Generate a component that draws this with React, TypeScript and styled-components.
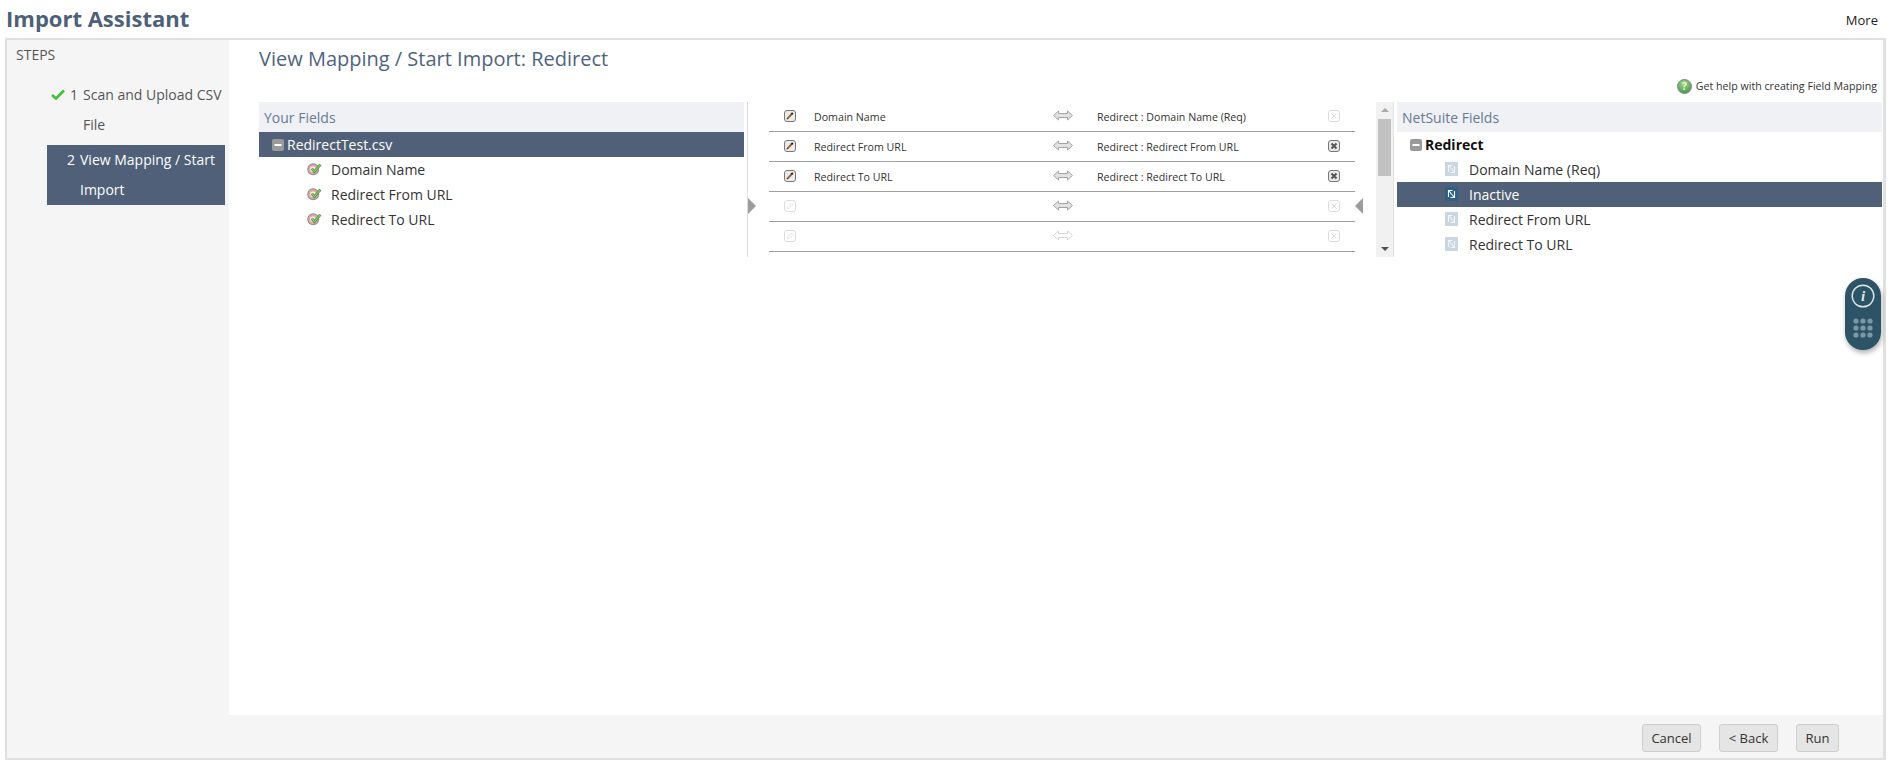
import React from "react";
import styled, { createGlobalStyle } from "styled-components";

const Global = createGlobalStyle`
  html, body { margin: 0; padding: 0; background: #fff; }
  body { font-family: "Open Sans", "Liberation Sans", sans-serif; overflow: hidden; }
  * { box-sizing: border-box; }
`;

const Page = styled.div`
  width: 1892px;
  height: 766px;
  padding: 0 6px 6px 5px;
  display: flex;
  flex-direction: column;
  overflow: hidden;
`;
const TopBar = styled.header`
  height: 38px;
  flex: none;
  display: flex;
  justify-content: space-between;
  align-items: flex-start;
`;
const Title = styled.h1`
  margin: 3px 0 0 1px;
  font-size: 22px;
  line-height: 30px;
  font-weight: 700;
  color: #4d5f79;
`;
const MoreLink = styled.span`
  margin: 11px 8px 0 0;
  font-size: 13px;
  line-height: 18px;
  font-weight: 500;
  color: #222;
`;
const Frame = styled.div`
  flex: 1;
  position: relative;
  display: flex;
  border: 2px solid #e0e0e0;
  border-right-width: 3px;
`;
const Sidebar = styled.aside`
  width: 222px;
  flex: none;
  background: #f5f5f5;
  padding: 6px 4px 0 9px;
`;
const SideTitle = styled.div`
  font-size: 14px;
  line-height: 18px;
  color: #555;
  margin-bottom: 16px;
`;
const StepBox = styled.div<{ $active?: boolean }>`
  display: flex;
  margin-left: 31px;
  margin-bottom: 5px;
  width: 178px;
  font-size: 14px;
  line-height: 30px;
  color: ${(p) => (p.$active ? "#fff" : "#555")};
  background: ${(p) => (p.$active ? "#4f6078" : "transparent")};
`;
const StepMark = styled.span`
  width: 36px;
  flex: none;
  display: flex;
  justify-content: flex-end;
  padding-right: 5px;
  white-space: nowrap;
  gap: 5px;
  align-items: flex-start;
`;
const StepMarkActive = styled(StepMark)`
  width: 33px;
  padding-right: 5px;
`;
const CheckSvg = styled.svg`
  margin-top: 9px;
  flex: none;
`;
const StepText = styled.span`
  display: block;
  white-space: pre-line;
`;
const Column = styled.div`
  flex: 1;
  min-width: 0;
  display: flex;
  flex-direction: column;
`;
const Main = styled.main`
  flex: 1;
  background: #fff;
  padding: 5px 1px 0 30px;
`;
const Heading = styled.h2`
  margin: 0;
  font-size: 20px;
  line-height: 28px;
  font-weight: 400;
  color: #4f6480;
`;
const HelpRow = styled.div`
  height: 29px;
  padding: 0 5px 3px 0;
  display: flex;
  align-items: center;
  justify-content: flex-end;
  gap: 4px;
  font-size: 10.65px;
  line-height: 16px;
  color: #333;
`;
const Mapper = styled.div`
  display: flex;
  align-items: flex-start;
  height: 155px;
`;
const FieldPanel = styled.section`
  width: 485px;
  flex: none;
`;
const PanelHead = styled.div`
  height: 30px;
  padding-left: 5px;
  background: #eff1f5;
  font-size: 14px;
  line-height: 32px;
  color: #6a7a92;
`;
const RootRow = styled.div<{ $dark?: boolean }>`
  height: 25px;
  display: flex;
  align-items: center;
  gap: 3px;
  padding-left: 13px;
  font-size: 14px;
  font-weight: ${(p) => (p.$dark ? 400 : 700)};
  color: ${(p) => (p.$dark ? "#fff" : "#111")};
  background: ${(p) => (p.$dark ? "#4f6078" : "transparent")};
`;
const LeafRow = styled.div<{ $active?: boolean }>`
  height: 25px;
  display: flex;
  align-items: center;
  padding-left: 48px;
  font-size: 14px;
  color: ${(p) => (p.$active ? "#fff" : "#333")};
  background: ${(p) => (p.$active ? "#4f6078" : "transparent")};
`;
const LeafIconSlot = styled.span`
  width: 24px;
  flex: none;
  display: flex;
  align-items: center;
  margin-top: -2px;
`;
const Middle = styled.div`
  flex: none;
  width: 653px;
  height: 155px;
  display: flex;
  align-items: flex-start;
  position: relative;
`;
const Rule = styled.div`
  flex: none;
  width: 1px;
  height: 155px;
  margin-left: 3px;
  background: #dedede;
`;
const TriangleSlot = styled.div`
  width: 21px;
  flex: none;
  padding-top: 96px;
`;
const Triangle = styled.div<{ $left?: boolean }>`
  width: 0;
  height: 0;
  border-top: 8px solid transparent;
  border-bottom: 8px solid transparent;
  ${(p) => (p.$left ? "border-right: 8px solid #9c9c9c;" : "border-left: 8px solid #9c9c9c;")}
`;
const MapTable = styled.div`
  width: 586px;
  flex: none;
`;
const MapRow = styled.div`
  height: 30px;
  display: grid;
  grid-template-columns: 45px 239px 44px 231px 1fr;
  align-items: center;
  border-bottom: 1px solid #a0a0a0;
  font-size: 10.65px;
  color: #333;
`;
const Cell = styled.span`
  display: flex;
  align-items: center;
  white-space: nowrap;
`;
const IconCell = styled.span<{ $inset?: boolean }>`
  display: flex;
  align-items: center;
  margin-top: -2px;
  padding-left: ${(p) => (p.$inset ? 15 : 0)}px;
`;
const Scroller = styled.div`
  flex: none;
  width: 18px;
  height: 155px;
  background: #f1f1f1;
  border-right: 1px solid #e2e2e2;
  display: flex;
  flex-direction: column;
  align-items: center;
  justify-content: space-between;
  position: relative;
  padding: 6px 0;
`;
const ScrollThumb = styled.div`
  position: absolute;
  left: 2px;
  top: 17px;
  width: 13px;
  height: 57px;
  background: #c1c1c1;
`;
const ScrollUp = styled.div`
  width: 0;
  height: 0;
  border-left: 4px solid transparent;
  border-right: 4px solid transparent;
  border-bottom: 4px solid #a8a8a8;
`;
const ScrollDown = styled.div`
  width: 0;
  height: 0;
  border-left: 4px solid transparent;
  border-right: 4px solid transparent;
  border-top: 4px solid #505050;
`;
const Footer = styled.footer`
  height: 43px;
  flex: none;
  background: #f5f5f5;
  display: flex;
  justify-content: flex-end;
  align-items: flex-start;
  gap: 18px;
  padding: 9px 44px 0 0;
`;
const Btn = styled.button<{ $w: number }>`
  width: ${(p) => p.$w}px;
  height: 28px;
  padding: 0;
  background: #e5e5e5;
  border: 1px solid #cfcfcf;
  border-radius: 3px;
  font-family: inherit;
  font-size: 13px;
  color: #333;
`;
const Widget = styled.div`
  position: absolute;
  left: 1838px;
  top: 238px;
  width: 36px;
  height: 72px;
  border-radius: 18px;
  background: #2d5367;
  box-shadow: 1px 3px 5px rgba(0, 0, 0, 0.3);
  display: flex;
  flex-direction: column;
  align-items: center;
  padding-top: 6px;
  gap: 10px;
`;

const Minus = ({ color = "#9a9a9a" }: { color?: string }) => (
  <svg width="12" height="12" viewBox="0 0 12 12">
    <rect width="12" height="12" rx="2" fill={color} />
    <rect x="2.5" y="5" width="7" height="2" fill="#fff" />
  </svg>
);
const Check = () => (
  <CheckSvg width="14" height="11" viewBox="0 0 14 11">
    <path d="M1 6 L5 9.5 L13 1.5" fill="none" stroke="#3fbf3a" strokeWidth="2.6" />
  </CheckSvg>
);
const FieldIcon = () => (
  <svg width="15" height="14" viewBox="0 0 15 14">
    <circle cx="6.2" cy="7.3" r="5.4" fill="#e9a6a6" stroke="#8f8f8f" strokeWidth="1.1" />
    <circle cx="6" cy="7.2" r="2.8" fill="#fbeeee" />
    <path d="M4.8 6.6 L7.4 9.6 L13.4 2.6" fill="none" stroke="#5f9e48" strokeWidth="2.8" />
    <path d="M4.8 6.6 L7.4 9.6 L13.4 2.6" fill="none" stroke="#9ed27e" strokeWidth="1" />
  </svg>
);
const NsIcon = ({ active }: { active?: boolean }) => (
  <svg width="13" height="14" viewBox="0 0 13 14">
    <rect width="13" height="14" fill={active ? "#2f5f85" : "#cad6e1"} />
    <path
      d="M3.5 10 L3.5 3.5 L7.5 3.5 M9.5 4 L9.5 10.5 L5.5 10.5 M4 4 L9 10"
      fill="none"
      stroke={active ? "#ffffff" : "#f1f5f8"}
      strokeWidth="1.1"
    />
  </svg>
);
const EditIcon = ({ off }: { off?: boolean }) => (
  <svg width="12" height="12" viewBox="0 0 12 12">
    <rect x="0.5" y="0.5" width="11" height="11" rx="2.5" fill={off ? "#fff" : "#ececec"} stroke={off ? "#dcdcdc" : "#777"} />
    {off ? (
      <path d="M3.5 8.5 L3.5 7 L7.5 3 L9 4.5 L5 8.5 Z" fill="none" stroke="#dcdcdc" strokeWidth="0.9" />
    ) : (
      <>
        <path d="M3.4 8.6 L7.8 4" stroke="#9a6a30" strokeWidth="2" />
        <path d="M7.4 4.4 L8.8 2.9" stroke="#222" strokeWidth="2" />
        <path d="M2.8 9.2 L3.6 8.4" stroke="#222" strokeWidth="1.2" />
      </>
    )}
  </svg>
);
const RemoveIcon = ({ on }: { on?: boolean }) => (
  <svg width="12" height="12" viewBox="0 0 12 12">
    <rect x="0.5" y="0.5" width="11" height="11" rx="2.5" fill={on ? "#e8e8e8" : "#fff"} stroke={on ? "#777" : "#dcdcdc"} />
    <path d="M3.5 3.5 L8.5 8.5 M8.5 3.5 L3.5 8.5" stroke={on ? "#555" : "#dcdcdc"} strokeWidth={on ? 2 : 1} />
  </svg>
);
const ArrowIcon = ({ faint }: { faint?: boolean }) => (
  <svg width="20" height="11" viewBox="0 0 20 11">
    <path
      d="M0.5 5.5 L5.5 1 L5.5 3.5 L14.5 3.5 L14.5 1 L19.5 5.5 L14.5 10 L14.5 7.5 L5.5 7.5 L5.5 10 Z"
      fill={faint ? "#fff" : "#e2e2e2"}
      stroke={faint ? "#d6d6d6" : "#a4a4a4"}
      strokeWidth="1"
    />
  </svg>
);
const HelpIcon = () => (
  <svg width="15" height="15" viewBox="0 0 15 15">
    <defs>
      <radialGradient id="helpGlow" cx="45%" cy="30%" r="75%">
        <stop offset="0%" stopColor="#a8d58e" />
        <stop offset="100%" stopColor="#3f9350" />
      </radialGradient>
    </defs>
    <circle cx="7.5" cy="7.5" r="7" fill="url(#helpGlow)" stroke="#7c8f7c" />
    <text x="7.5" y="11" textAnchor="middle" fontSize="10" fontWeight="700" fill="#f4f8c8" fontFamily="Open Sans">?</text>
  </svg>
);
const InfoIcon = () => (
  <svg width="24" height="24" viewBox="0 0 24 24">
    <circle cx="12" cy="12" r="10.8" fill="none" stroke="#dfe7ea" strokeWidth="1.4" />
    <text x="12" y="17" textAnchor="middle" fontSize="15" fontStyle="italic" fontWeight="700" fill="#dfe7ea" fontFamily="Liberation Serif">i</text>
  </svg>
);
const DotsIcon = () => (
  <svg width="20" height="20" viewBox="0 0 20 20" fill="#7d98a5">
    {[3, 10, 17].flatMap((y) =>
      [3, 10, 17].map((x) => <circle key={`${x}-${y}`} cx={x} cy={y} r="2.6" />)
    )}
  </svg>
);

const sources = ["Domain Name", "Redirect From URL", "Redirect To URL"];
const rows = [
  { from: "Domain Name", to: "Redirect : Domain Name (Req)", on: false },
  { from: "Redirect From URL", to: "Redirect : Redirect From URL", on: true },
  { from: "Redirect To URL", to: "Redirect : Redirect To URL", on: true },
  { from: "", to: "", on: false },
  { from: "", to: "", on: false },
];
const targets = ["Domain Name (Req)", "Inactive", "Redirect From URL", "Redirect To URL"];

export default function App() {
  return (
    <Page>
      <Global />
      <TopBar>
        <Title>Import Assistant</Title>
        <MoreLink>More</MoreLink>
      </TopBar>
      <Frame>
        <Sidebar>
          <SideTitle>STEPS</SideTitle>
          <StepBox>
            <StepMark>
              <Check />1
            </StepMark>
            <StepText>{"Scan and Upload CSV\nFile"}</StepText>
          </StepBox>
          <StepBox $active>
            <StepMarkActive>2</StepMarkActive>
            <StepText>{"View Mapping / Start\nImport"}</StepText>
          </StepBox>
        </Sidebar>
        <Column>
          <Main>
            <Heading>View Mapping / Start Import: Redirect</Heading>
            <HelpRow>
              <HelpIcon />
              Get help with creating Field Mapping
            </HelpRow>
            <Mapper>
              <FieldPanel>
                <PanelHead>Your Fields</PanelHead>
                <RootRow $dark>
                  <Minus />
                  RedirectTest.csv
                </RootRow>
                {sources.map((s) => (
                  <LeafRow key={s}>
                    <LeafIconSlot>
                      <FieldIcon />
                    </LeafIconSlot>
                    {s}
                  </LeafRow>
                ))}
              </FieldPanel>
              <Middle>
                <Rule />
                <TriangleSlot>
                  <Triangle />
                </TriangleSlot>
                <MapTable>
                  {rows.map((r, i) => (
                    <MapRow key={i}>
                      <IconCell $inset>
                        <EditIcon off={!r.from} />
                      </IconCell>
                      <Cell>{r.from}</Cell>
                      <IconCell>
                        <ArrowIcon faint={i === 4} />
                      </IconCell>
                      <Cell>{r.to}</Cell>
                      <IconCell>
                        <RemoveIcon on={r.on} />
                      </IconCell>
                    </MapRow>
                  ))}
                </MapTable>
                <TriangleSlot>
                  <Triangle $left />
                </TriangleSlot>
                <Scroller>
                  <ScrollUp />
                  <ScrollThumb />
                  <ScrollDown />
                </Scroller>
              </Middle>
              <FieldPanel>
                <PanelHead>NetSuite Fields</PanelHead>
                <RootRow>
                  <Minus />
                  Redirect
                </RootRow>
                {targets.map((t, i) => (
                  <LeafRow key={t} $active={i === 1}>
                    <LeafIconSlot>
                      <NsIcon active={i === 1} />
                    </LeafIconSlot>
                    {t}
                  </LeafRow>
                ))}
              </FieldPanel>
            </Mapper>
          </Main>
          <Footer>
            <Btn $w={59}>Cancel</Btn>
            <Btn $w={59}>&lt; Back</Btn>
            <Btn $w={43}>Run</Btn>
          </Footer>
        </Column>
        <Widget>
          <InfoIcon />
          <DotsIcon />
        </Widget>
      </Frame>
    </Page>
  );
}
